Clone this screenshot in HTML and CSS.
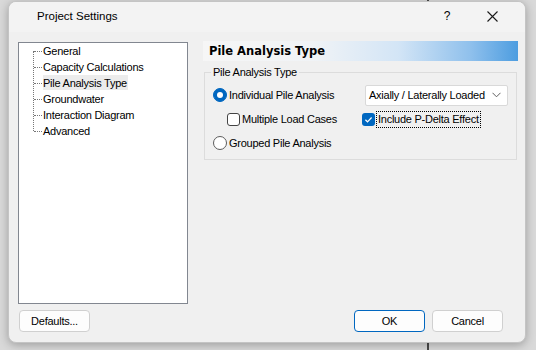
FILE: index.html
```html
<!DOCTYPE html>
<html lang="en">
<head>
  <meta charset="UTF-8" />
  <title>Project Settings</title>
  <link rel="stylesheet" href="styles.css">
</head>
<body>

  <!-- window edge behind the dialog -->
  <div class="desk-line"></div>

  <div class="dialog">
    <!-- Title bar -->
    <div class="titlebar">
      <span class="title">Project Settings</span>
      <span class="help">?</span>
      <span class="close">
        <svg width="11" height="11" viewBox="0 0 11 11">
          <path d="M0.5 0.5 L10.5 10.5 M10.5 0.5 L0.5 10.5" stroke="#1a1a1a" stroke-width="1.1" fill="none"/>
        </svg>
      </span>
    </div>

    <div class="dialog-body">
      <div class="main">
        <!-- Tree -->
        <div class="tree">
          <ul class="tree-list">
            <li>General</li>
            <li>Capacity Calculations</li>
            <li><span class="selected">Pile Analysis Type</span></li>
            <li>Groundwater</li>
            <li>Interaction Diagram</li>
            <li>Advanced</li>
          </ul>
        </div>

        <!-- Page -->
        <div class="panel">
          <div class="panel-header">Pile Analysis Type</div>

          <fieldset class="group">
            <legend>Pile Analysis Type</legend>
            <div class="opt-grid">
              <label class="opt">
                <span class="radio checked"></span>
                <span>Individual Pile Analysis</span>
              </label>
              <div class="combo">
                <span>Axially / Laterally Loaded</span>
                <svg width="9" height="6" viewBox="0 0 9 6">
                  <path d="M0.5 0.8 L4.5 4.8 L8.5 0.8" stroke="#606060" stroke-width="1" fill="none"/>
                </svg>
              </div>

              <label class="opt indent">
                <span class="check"></span>
                <span>Multiple Load Cases</span>
              </label>
              <label class="opt">
                <span class="check checked">
                  <svg width="13" height="13" viewBox="0 0 13 13">
                    <path d="M3.4 6.8 L5.5 8.8 L9.6 4.5" stroke="#fff" stroke-width="1.2" fill="none"/>
                  </svg>
                </span>
                <span class="focus">Include P-Delta Effect</span>
              </label>

              <label class="opt">
                <span class="radio"></span>
                <span>Grouped Pile Analysis</span>
              </label>
            </div>
          </fieldset>
        </div>
      </div>

      <!-- Buttons -->
      <div class="footer">
        <button class="btn">Defaults...</button>
        <div class="spacer"></div>
        <button class="btn primary">OK</button>
        <button class="btn">Cancel</button>
      </div>
    </div>
  </div>

</body>
</html>
```

FILE: styles.css
```css
:root {
  --accent: #0067c0;
  --face: #f0f0f0;
  --text: #000;
  --border: #d0d0d0;
}

* {
  box-sizing: border-box;
}

body {
  margin: 0;
  width: 536px;
  height: 350px;
  overflow: hidden;
  background: #d9d9d9;
  font-family: "Liberation Sans", Arial, sans-serif;
  font-size: 11px;
  letter-spacing: -0.25px;
  color: var(--text);
  position: relative;
}

.desk-line {
  position: absolute;
  left: 427px;
  top: 0;
  width: 2px;
  height: 350px;
  background: #4a4a4a;
}

.dialog {
  position: relative;
  margin: 1px 0 0 8px;
  width: 518px;
  height: 342px;
  background: var(--face);
  border: 1px solid #c4c4c4;
  border-radius: 8px;
  box-shadow: 0 2px 10px rgba(0, 0, 0, 0.28);
  display: flex;
  flex-direction: column;
  overflow: hidden;
}

/* title bar */
.titlebar {
  height: 30px;
  flex: none;
  display: flex;
  align-items: center;
  background: #f3f3f3;
  padding: 0 0 2px 28px;
}

.title {
  font-size: 11.5px;
  letter-spacing: 0;
  flex: 1;
}

.help {
  font-size: 12px;
  width: 20px;
  text-align: center;
  margin-right: 30px;
}

.close {
  width: 11px;
  height: 11px;
  margin-right: 27px;
  display: flex;
}

.dialog-body {
  flex: 1;
  padding: 9px 7px 0 9px;
  display: flex;
  flex-direction: column;
}

.main {
  display: flex;
}

/* tree */
.tree {
  width: 170px;
  height: 262px;
  margin-top: 1px;
  background: #fff;
  border: 1px solid #828790;
}

.tree-list {
  position: relative;
  list-style: none;
  margin: 0;
  padding: 0 0 0 14px;
}

.tree-list::before {
  content: "";
  position: absolute;
  left: 14px;
  top: 8px;
  height: 80px;
  border-left: 1px dotted #777;
}

.tree-list li {
  position: relative;
  line-height: 16px;
  height: 16px;
  padding-left: 10px;
  white-space: nowrap;
}

.tree-list li::before {
  content: "";
  position: absolute;
  left: 1px;
  top: 8px;
  width: 8px;
  border-top: 1px dotted #777;
}

.selected {
  background: #ececec;
  padding: 2px 1px 1px 0;
}

/* page */
.panel {
  flex: 1;
  margin-left: 15px;
  display: flex;
  flex-direction: column;
}

.panel-header {
  height: 20px;
  line-height: 20px;
  padding-left: 6px;
  font-family: "DejaVu Sans", Verdana, sans-serif;
  font-weight: bold;
  font-size: 11.5px;
  letter-spacing: 0;
  background: linear-gradient(to right, #f6f6f6 0%, #f0f3f6 35%, #d3e5f6 62%, #8fc0ec 85%, #4d9de0 100%);
}

.group {
  margin: 5px 1px 0 1px;
  padding: 4px 8px 4px 8px;
  border: 1px solid #dcdcdc;
}

.group legend {
  padding: 0 2px;
  margin-left: -2px;
  line-height: 13px;
}

.opt-grid {
  display: grid;
  grid-template-columns: 149px 1fr;
  grid-auto-rows: 24px;
  align-items: center;
}

.opt {
  display: flex;
  align-items: center;
  gap: 2px;
  white-space: nowrap;
}

.opt.indent {
  padding-left: 14px;
}

.radio {
  width: 14px;
  height: 14px;
  border-radius: 50%;
  border: 1px solid #5c5c5c;
  background: #fff;
  flex: none;
  display: flex;
  align-items: center;
  justify-content: center;
}

.radio.checked {
  border-color: var(--accent);
  background: var(--accent);
}

.radio.checked::after {
  content: "";
  width: 6px;
  height: 6px;
  border-radius: 50%;
  background: #fff;
}

.check {
  width: 13px;
  height: 13px;
  border-radius: 3px;
  border: 1px solid #444;
  background: #fff;
  flex: none;
  display: flex;
}

.check.checked {
  border: none;
  background: var(--accent);
}

.focus {
  outline: 1px dotted #000;
  padding: 1px 1px 2px 1px;
}

.combo {
  margin-left: 3px;
  width: 143px;
  height: 21px;
  background: #fff;
  border: 1px solid #d9d9d9;
  border-radius: 2px;
  display: flex;
  align-items: center;
  justify-content: space-between;
  padding: 0 6px 0 3px;
}

/* buttons */
.footer {
  display: flex;
  margin-top: 6px;
  padding: 0 15px 0 1px;
  gap: 7px;
}

.spacer {
  flex: 1;
}

.btn {
  width: 71px;
  height: 22px;
  font-family: "Liberation Sans", Arial, sans-serif;
  font-size: 11px;
  letter-spacing: -0.25px;
  color: var(--text);
  background: #fdfdfd;
  border: 1px solid var(--border);
  border-radius: 4px;
  padding: 0;
}

.btn.primary {
  border-color: var(--accent);
}
```
